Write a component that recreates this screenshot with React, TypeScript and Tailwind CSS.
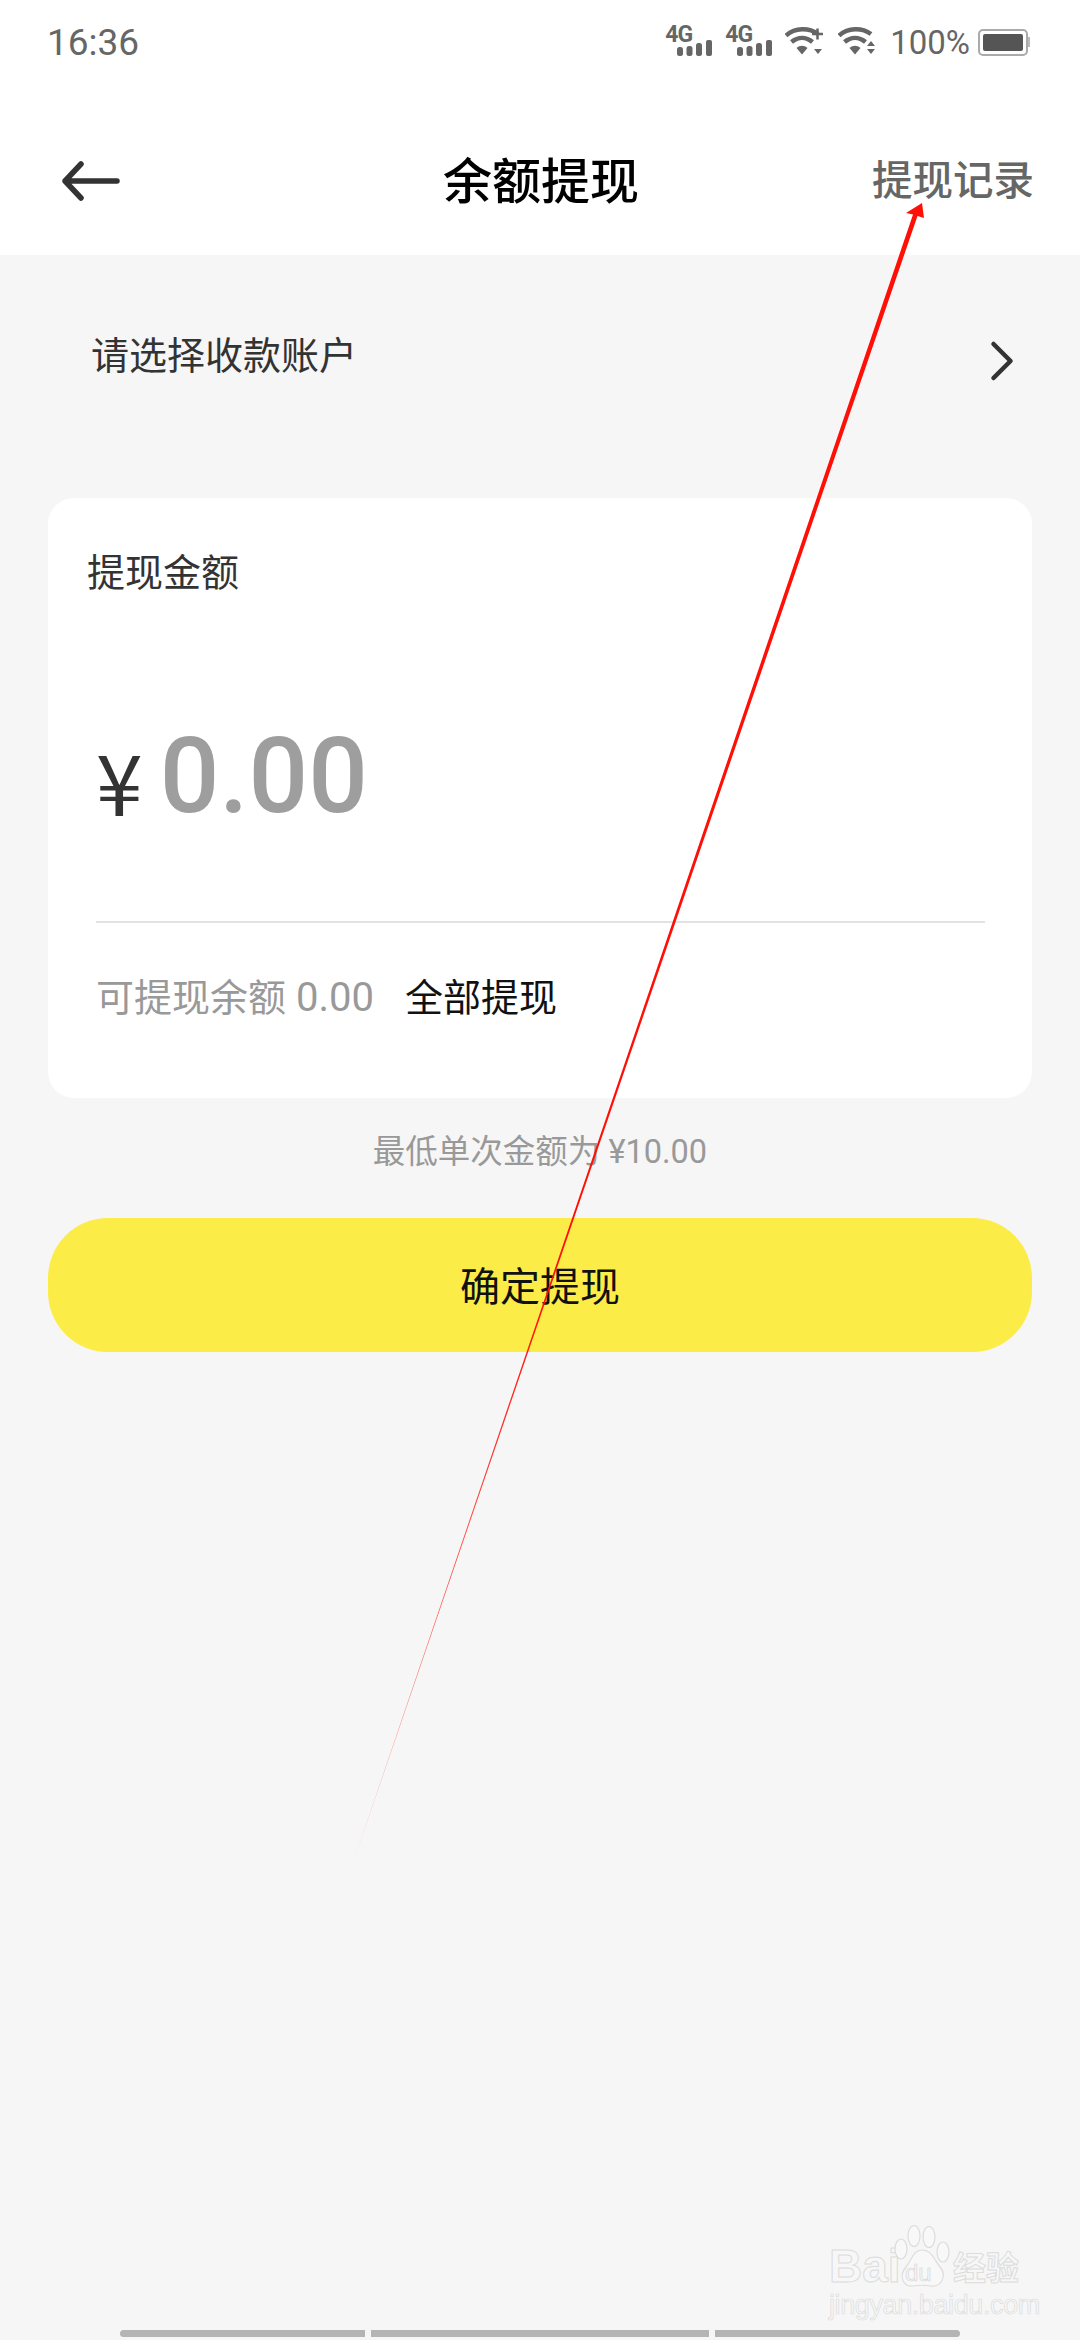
import { ChevronRight } from 'lucide-react';

const FONT = 'font-[Roboto,"Noto_Sans_CJK_SC",sans-serif]';

function SignalIcon() {
  return (
    <div className="relative w-[47px] h-[30px]">
      <span className="absolute left-0 top-[-5px] text-[23px] leading-[26px] font-bold tracking-[-1px] text-[#666]">4G</span>
      <svg viewBox="0 0 35 16" className="absolute left-[12px] top-[13px] w-[35px] h-[16px]">
        <rect x="0" y="7" width="6" height="9" rx="2.500" fill="#666" />
        <rect x="9.500" y="6" width="6" height="10" rx="2.500" fill="#666" />
        <rect x="19" y="3" width="6" height="13" rx="2.500" fill="#666" />
        <rect x="29" y="0" width="6" height="16" rx="2" fill="#666" />
      </svg>
    </div>
  );
}

function WifiIcon({ plus }: { plus?: boolean }) {
  return (
    <svg viewBox="0 0 38 30" className="w-[38px] h-[30px]" fill="none">
      <path d="M1 8.500 C10 0.500 24 0.500 33 7" stroke="#666" strokeWidth="4.500" />
      <path d="M6.500 15 C13 9.500 21 9.500 27.500 15" stroke="#666" strokeWidth="4.500" />
      <path d="M11.500 21 C15 18 19 18 22.500 21 L17 27.500 Z" fill="#666" />
      {plus ? (
        <path d="M27 7 H38 M32.500 1.500 V12.500" stroke="#666" strokeWidth="2.500" />
      ) : (
        <path d="M33 14 L37 19 H29 Z" fill="#666" />
      )}
      <path d="M29 22 H37 L33 27 Z" fill="#666" />
    </svg>
  );
}

function StatusBar() {
  return (
    <div className="h-[84px] pl-[47px] pr-[50px] flex items-center justify-between text-[#666]">
      <span className="text-[37px] leading-none">16:36</span>
      <div className="flex items-center">
        <SignalIcon />
        <div className="ml-[13px]"><SignalIcon /></div>
        <div className="ml-[13px]"><WifiIcon plus /></div>
        <div className="ml-[15px]"><WifiIcon /></div>
        <span className="ml-[14px] text-[33px] leading-none">100%</span>
        <div className="ml-[8px] flex items-center">
          <div className="w-[50px] h-[27px] rounded-[5px] border-[2px] border-[#aaa] p-[3px]">
            <div className="w-full h-full rounded-[2px] bg-[#555]" />
          </div>
          <div className="w-[2px] h-[10px] bg-[#bbb]" />
        </div>
      </div>
    </div>
  );
}

function BackArrow() {
  return (
    <svg viewBox="0 0 60 44" className="w-[60px] h-[44px]" fill="none" stroke="#333" strokeWidth="5.500" strokeLinecap="round" strokeLinejoin="round">
      <path d="M57 22 H5 M21 5 L5 22 L21 39" />
    </svg>
  );
}

function Watermark() {
  return (
    <div className="absolute left-[829px] top-[2225px] w-[194px] h-[92px] text-[#f7f7f7] [-webkit-text-stroke:1px_#dcdcdc]">
      <span className="absolute left-0 top-[18px] text-[46px] leading-[46px] font-bold font-[Liberation_Sans,sans-serif]">Bai</span>
      <svg viewBox="0 0 60 63" className="absolute left-[64px] top-0 w-[60px] h-[63px]" fill="#f8f8f8" stroke="#dcdcdc" strokeWidth="1.200">
        <ellipse cx="21" cy="11" rx="6" ry="10.500" />
        <ellipse cx="36" cy="12" rx="6" ry="10.500" />
        <ellipse cx="8" cy="24" rx="6" ry="10" />
        <ellipse cx="50" cy="27" rx="6" ry="10" />
        <path d="M29 25 C39 25 41 35 47 42 C54 50 49 62 38 61 C32 60 26 60 20 61 C9 62 6 50 13 42 C19 35 20 25 29 25 Z" />
      </svg>
      <span className="absolute left-[76px] top-[36px] text-[24px] leading-[24px] font-[Liberation_Sans,sans-serif] [-webkit-text-stroke:0.6px_#d4d4d4]">du</span>
      <span className="absolute left-[124px] top-[24px] text-[33px] leading-[40px] font-bold">经验</span>
      <span className="absolute left-0 top-[65px] text-[27px] leading-[30px] tracking-[-0.4px] whitespace-nowrap font-[Liberation_Sans,sans-serif] [-webkit-text-stroke:0.7px_#dcdcdc]">jingyan.baidu.com</span>
    </div>
  );
}

function RedArrow() {
  return (
    <svg viewBox="0 0 1080 2340" className="absolute inset-0 w-[1080px] h-[2340px] pointer-events-none">
      <defs>
        <linearGradient id="fade" gradientUnits="userSpaceOnUse" x1="922" y1="203" x2="352" y2="1866">
          <stop offset="0" stopColor="#ff0f06" />
          <stop offset="0.66" stopColor="#ff0f06" />
          <stop offset="1" stopColor="#ff0f06" stopOpacity="0.35" />
        </linearGradient>
      </defs>
      <path d="M922 203 L924 218 L917.500 216 L352 1866 L913 214.500 L906 213 Z" fill="url(#fade)" />
    </svg>
  );
}

export default function App() {
  return (
    <div className={`relative w-[1080px] h-[2340px] overflow-hidden bg-[#f6f6f6] ${FONT}`}>
      {/* header */}
      <div className="bg-white h-[255px]">
        <StatusBar />
        <div className="relative h-[171px] pl-[60px] pr-[46px] pt-[22px] flex items-center justify-between">
          <BackArrow />
          <span className="absolute left-[2px] right-0 top-[74px] text-center text-[49px] leading-[50px] font-medium text-black">余额提现</span>
          <span className="text-[40.500px] leading-[50px] font-medium text-[#666]">提现记录</span>
        </div>
      </div>

      {/* account row */}
      <div className="h-[243px] pl-[91px] pr-[44px] pb-[42px] flex items-center justify-between">
        <span className="text-[38px] leading-[50px] text-[#333]">请选择收款账户</span>
        <ChevronRight className="w-[68px] h-[68px] mt-[10px] text-[#333]" strokeWidth={1.600} />
      </div>

      {/* amount card */}
      <div className="mx-[48px] h-[600px] rounded-[26px] bg-white flex flex-col">
        <div className="pt-[50px] pl-[39px] text-[38px] leading-[50px] text-[#333]">提现金额</div>
        <div className="mt-[122px] pl-[48px] flex items-center h-[112px]">
          <span className="text-[84px] leading-none text-[#333] font-[Noto_Sans_CJK_SC,sans-serif] mt-[8px]">¥</span>
          <span className="ml-[17px] text-[105px] leading-none font-medium text-[#9e9e9e]">0.00</span>
        </div>
        <div className="mt-[89px] ml-[48px] mr-[47px] h-[2px] bg-[#e2e2e2]" />
        <div className="mt-[50px] pl-[48px] flex items-center text-[38px] leading-[50px]">
          <span className="text-[#999]">可提现余额</span>
          <span className="ml-[10px] text-[40px] text-[#999]">0.00</span>
          <span className="ml-[31px] text-[#111]">全部提现</span>
        </div>
      </div>

      <div className="mt-[34px] text-center text-[32.500px] leading-[40px] text-[#999]">最低单次金额为 ¥10.00</div>

      <div className="mt-[46px] mx-[48px] h-[134px] pt-[6px] rounded-[60px] bg-[#fcec47] flex items-center justify-center text-[40px] text-[#111]">
        确定提现
      </div>

      <Watermark />

      {/* gesture bars */}
      <div className="absolute left-[120px] top-[2330px] flex gap-[6px]">
        <div className="w-[245px] h-[7px] rounded-l-full bg-[#b4b4b4]" />
        <div className="w-[338px] h-[7px] bg-[#b4b4b4]" />
        <div className="w-[245px] h-[7px] rounded-r-full bg-[#b4b4b4]" />
      </div>

      <RedArrow />
    </div>
  );
}
